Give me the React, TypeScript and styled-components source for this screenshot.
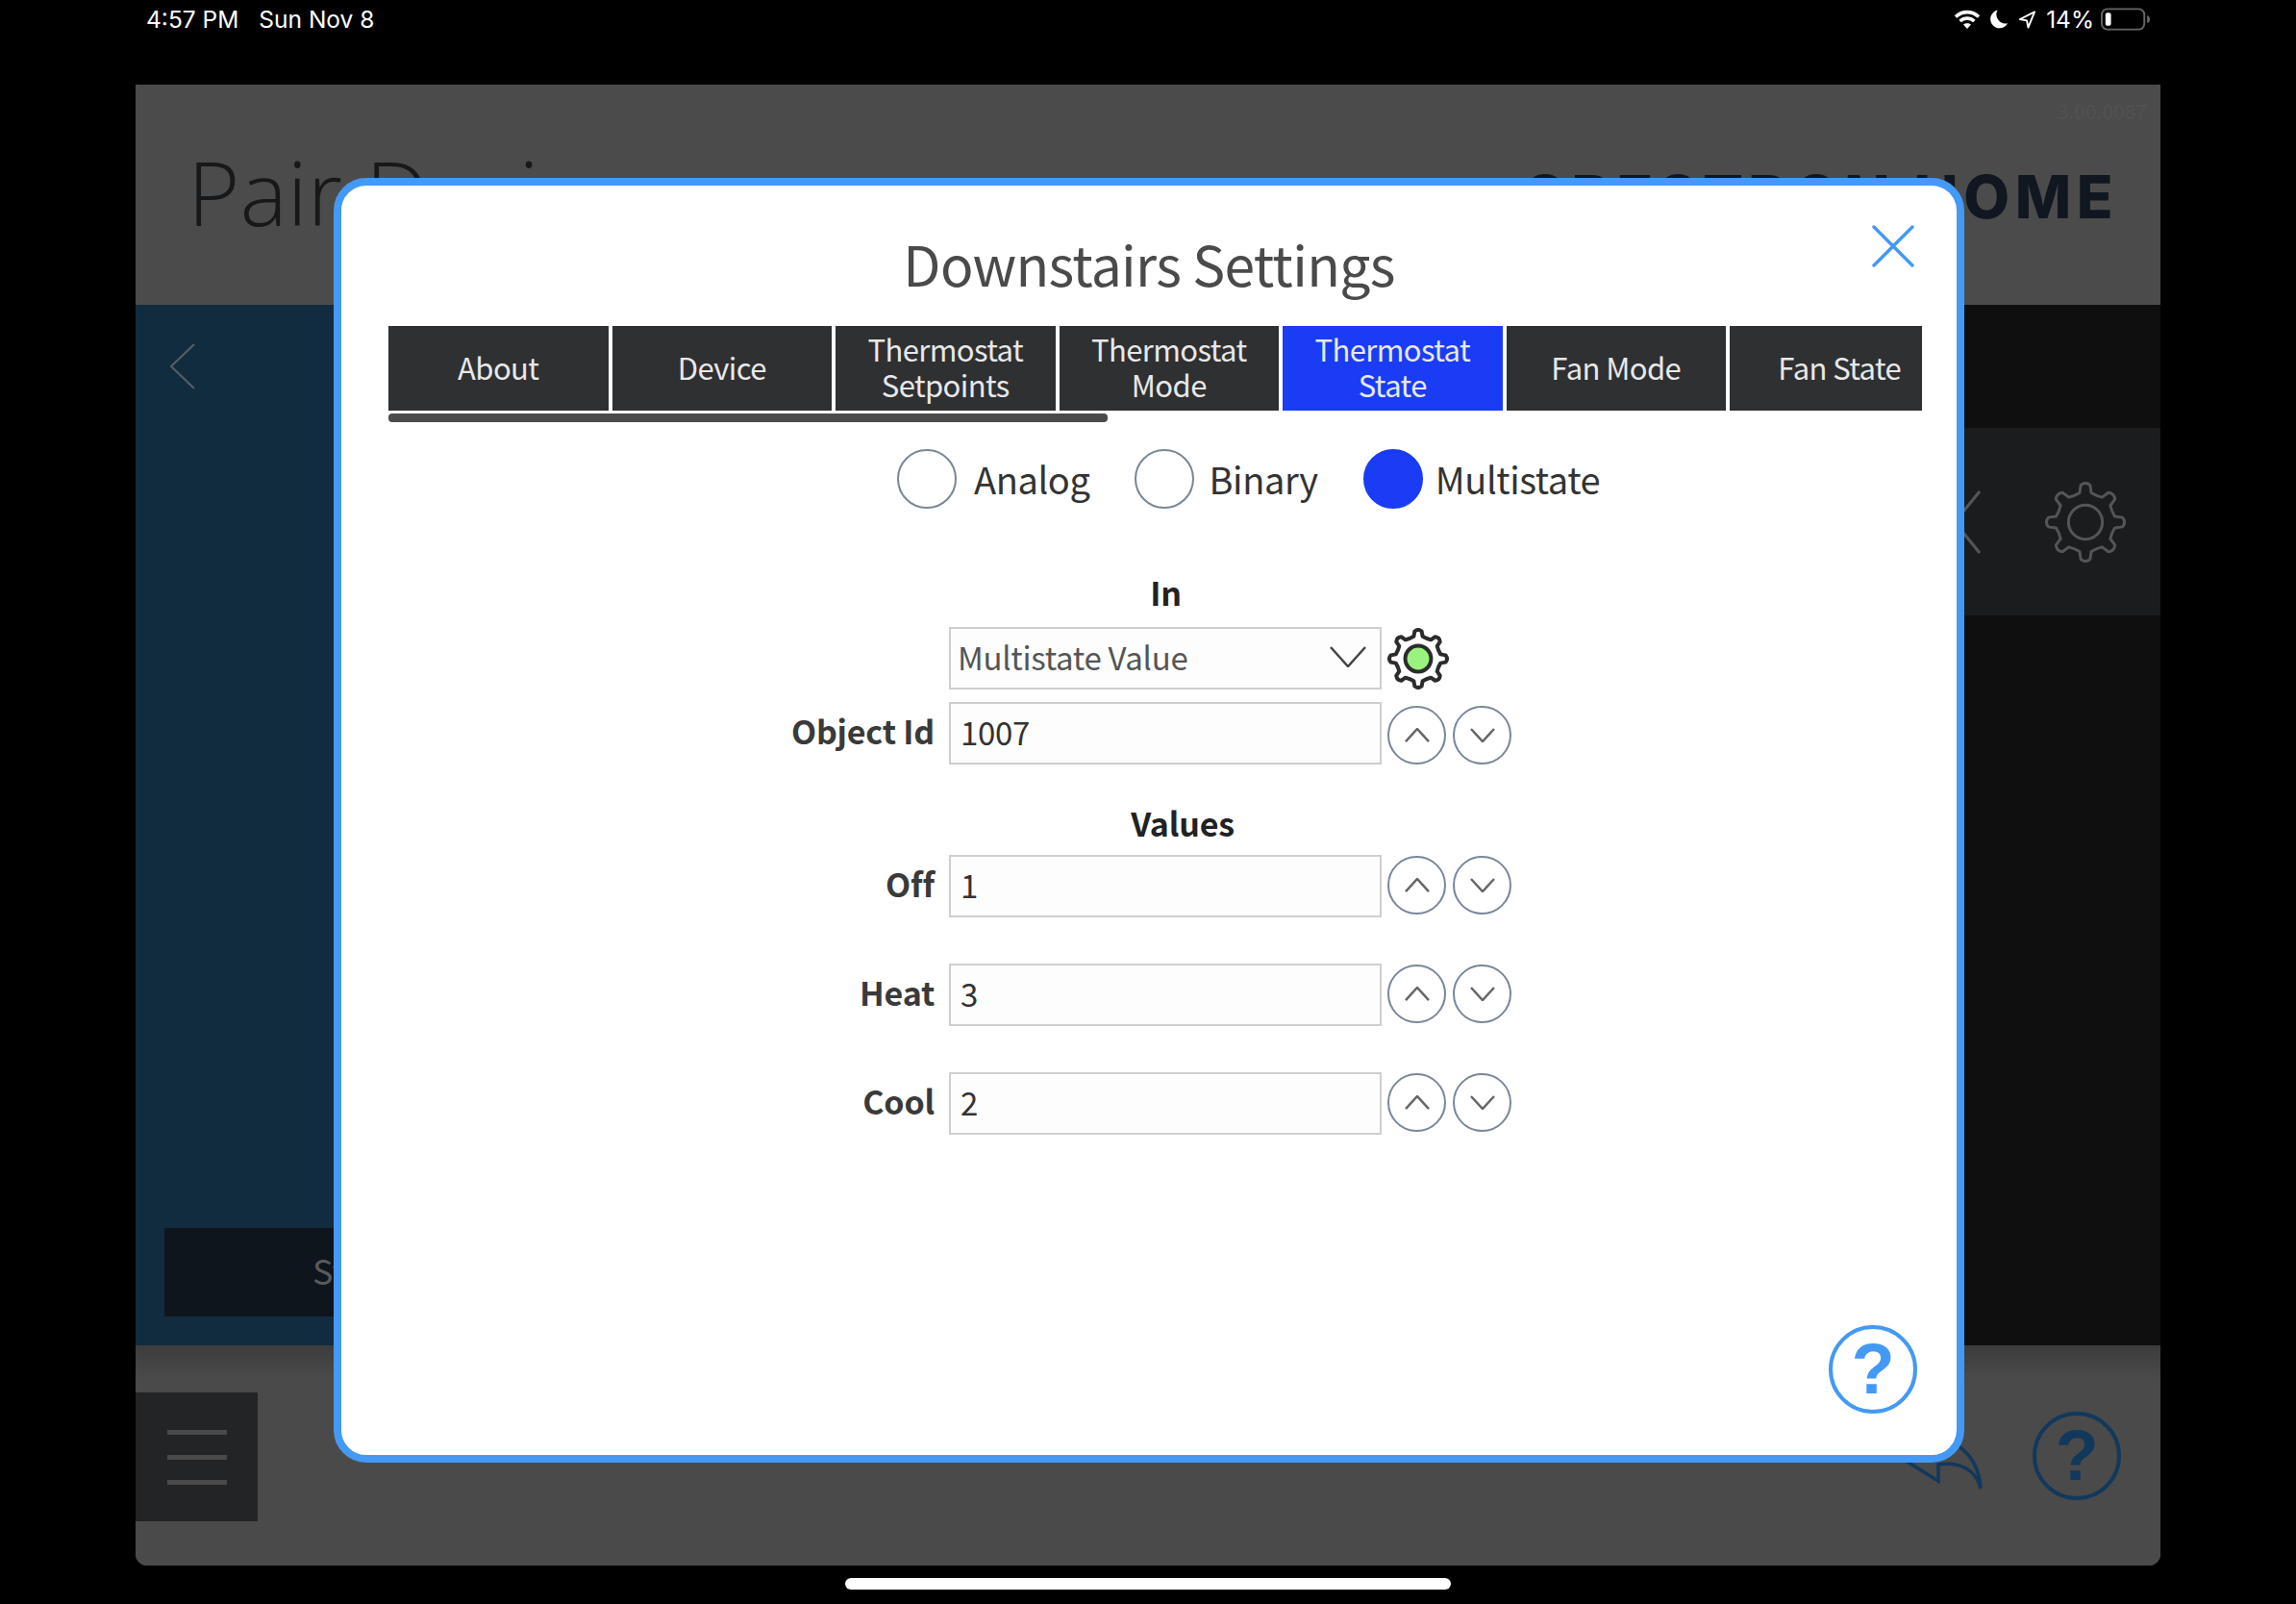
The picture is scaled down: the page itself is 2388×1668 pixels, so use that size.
import React from 'react';
import styled, { createGlobalStyle } from 'styled-components';

const UI_FONT = '"Noto Sans CJK SC", "Noto Sans", sans-serif';
const BLUE = '#4499f5';

const GlobalStyle = createGlobalStyle`
  html, body { margin: 0; padding: 0; background: #000; }
  * { box-sizing: border-box; }
`;

const Screen = styled.div`
  position: relative;
  width: 2388px;
  height: 1668px;
  background: #000;
  overflow: hidden;
  display: flex;
  flex-direction: column;
`;

const StatusBar = styled.div`
  height: 88px;
  flex: none;
  padding: 4px 151px 0 152px;
  display: flex;
  align-items: flex-start;
  justify-content: space-between;
  color: #fff;
  font: 400 24.5px/32px 'Inter', 'Liberation Sans', sans-serif;
`;

const StatusLeft = styled.div`
  display: flex;
  gap: 21px;
`;

const StatusRight = styled.div`
  display: flex;
  align-items: center;
  height: 32px;
  gap: 10px;
`;

const BatteryIcon = styled.svg`
  margin-left: -3px;
`;

const Frame = styled.div`
  flex: none;
  width: 2106px;
  height: 1540px;
  margin-left: 141px;
  border-radius: 0 0 12px 12px;
  overflow: hidden;
  display: flex;
  flex-direction: column;
  background: #4a4a4a;
`;

const HeaderBar = styled.header`
  position: relative;
  height: 229px;
  flex: none;
  padding: 0 44px 0 54px;
  display: flex;
  align-items: center;
  justify-content: space-between;
  background: #4b4b4b;
`;

const PageTitle = styled.h1`
  margin: 0;
  font: 300 93px/1 'Open Sans', sans-serif;
  color: #17181a;
  transform: translateY(-3px);
`;

const Brand = styled.div`
  font: 800 62px/1 'Inter', 'Liberation Sans', sans-serif;
  letter-spacing: 5.5px;
  color: #111720;
  transform: translateY(2px);
`;

const Version = styled.span`
  position: absolute;
  top: 17px;
  right: 14px;
  font: 400 21px/1 ${UI_FONT};
  color: #525252;
`;

const Middle = styled.div`
  flex: none;
  height: 1082px;
  display: grid;
  grid-template-columns: 1fr 1fr;
`;

const BluePanel = styled.div`
  background: #122c3f;
  padding: 40px 0 30px 30px;
  display: flex;
  flex-direction: column;
  justify-content: space-between;
`;

const BackIcon = styled.svg`
  display: block;
  margin-left: 6px;
`;

const StartButton = styled.div`
  height: 92px;
  background: #0e151c;
  padding-left: 154px;
  font: 400 36px/87px ${UI_FONT};
  color: #585a5c;
`;

const DarkPanel = styled.div`
  background: #0f0f0f;
  padding-top: 128px;
`;

const ToolStrip = styled.div`
  height: 195px;
  background: #1b1c1e;
  padding-right: 36px;
  display: flex;
  align-items: center;
  justify-content: flex-end;
  gap: 67px;
`;

const BottomBar = styled.footer`
  flex: 1;
  padding: 49px 41px 46px 0;
  display: flex;
  align-items: flex-start;
  justify-content: space-between;
  background: linear-gradient(#3c3c3c, #4a4a4a 34px);
`;

const MenuBox = styled.div`
  width: 127px;
  height: 134px;
  background: #232425;
  display: flex;
  flex-direction: column;
  justify-content: center;
  align-items: center;
  gap: 21px;
`;

const MenuLine = styled.span`
  width: 62px;
  height: 5px;
  background: #4a4a4a;
`;

const BottomActions = styled.div`
  display: flex;
  align-items: flex-start;
  gap: 51px;
  margin-top: 20px;
`;

const ReplyIcon = styled.svg`
  margin-top: 35px;
  overflow: visible;
`;

const HelpCircle = styled.div<{ $color: string }>`
  width: 92px;
  height: 92px;
  border-radius: 50%;
  border: 4px solid ${(p) => p.$color};
  color: ${(p) => p.$color};
  display: flex;
  align-items: center;
  justify-content: center;
  font: 700 74px/1 'Liberation Sans', sans-serif;
`;

const HomeIndicator = styled.div`
  position: absolute;
  left: 879px;
  top: 1641px;
  width: 630px;
  height: 12px;
  border-radius: 6px;
  background: #fff;
`;

const Modal = styled.section`
  position: absolute;
  left: 347px;
  top: 185px;
  width: 1696px;
  height: 1336px;
  background: #fff;
  border: 8px solid ${BLUE};
  border-radius: 34px;
  font-family: ${UI_FONT};
  padding: 0 36px 0 49px;
`;

const ModalTitle = styled.h2`
  margin: 0 13px 0 0;
  height: 146px;
  padding-top: 44px;
  text-align: center;
  font: 400 57px/72px ${UI_FONT};
  letter-spacing: -0.7px;
  color: #4a4a4a;
`;

const CloseIcon = styled.svg`
  position: absolute;
  right: 44px;
  top: 41px;
`;

const TabStrip = styled.div`
  position: relative;
  width: 1595px;
  height: 100px;
  overflow: hidden;
`;

const TabRow = styled.div`
  display: flex;
  gap: 4px;
  width: max-content;
`;

const Tab = styled.div<{ $active?: boolean }>`
  flex: none;
  width: 228.5px;
  height: 88px;
  padding-bottom: 4px;
  display: flex;
  align-items: center;
  justify-content: center;
  text-align: center;
  white-space: pre-line;
  font-size: 31px;
  letter-spacing: -0.6px;
  line-height: 37px;
  color: #e8e8e8;
  background: ${(p) => (p.$active ? '#1a3cf5' : '#2f3032')};
`;

const ScrollThumb = styled.div`
  position: absolute;
  left: 0;
  top: 91px;
  width: 748px;
  height: 9px;
  border-radius: 4px;
  background: #4a4a4a;
`;

const RadioRow = styled.div`
  display: flex;
  height: 62px;
  margin-top: 28px;
  padding-left: 529px;
  align-items: center;
`;

const RadioCircle = styled.span<{ $checked?: boolean }>`
  flex: none;
  width: 62px;
  height: 62px;
  border-radius: 50%;
  border: 2px solid ${(p) => (p.$checked ? '#1a3cf5' : '#7a8798')};
  background: ${(p) => (p.$checked ? '#1a3cf5' : '#fff')};
`;

const RadioLabel = styled.span<{ $gap: number; $after: number }>`
  margin-left: ${(p) => p.$gap}px;
  margin-right: ${(p) => p.$after}px;
  font-size: 38px;
  letter-spacing: -0.4px;
  line-height: 62px;
  color: #333;
`;

const SectionHeading = styled.div<{ $shift: number; $top: number; $bottom: number }>`
  margin: ${(p) => p.$top}px 0 ${(p) => p.$bottom}px ${(p) => p.$shift}px;
  font-size: 34px;
  letter-spacing: -0.2px;
  line-height: 44px;
  font-weight: 700;
  color: #222;
`;

const HeadingRow = styled.div`
  display: flex;
  justify-content: center;
`;

const FieldRow = styled.div<{ $after?: number }>`
  display: grid;
  grid-template-columns: 568px 450px auto;
  column-gap: 15px;
  align-items: center;
  height: 65px;
  margin-bottom: ${(p) => p.$after ?? 0}px;
`;

const FieldLabel = styled.label`
  text-align: right;
  font-size: 34px;
  letter-spacing: -0.2px;
  line-height: 44px;
  padding-bottom: 5px;
  font-weight: 700;
  color: #3a3a3a;
`;

const FieldBox = styled.div<{ $muted?: boolean }>`
  width: 450px;
  height: 65px;
  padding: 0 14px ${(p) => (p.$muted ? 3 : 4)}px ${(p) => (p.$muted ? 7 : 10)}px;
  border: 2px solid #cfcfcf;
  background: #fdfdfd;
  display: flex;
  align-items: center;
  justify-content: space-between;
  font-size: 33px;
  letter-spacing: -0.3px;
  color: ${(p) => (p.$muted ? '#555' : '#333')};
`;

const Stepper = styled.div<{ $low?: boolean }>`
  display: flex;
  gap: 7px;
  margin-left: -9px;
  align-self: ${(p) => (p.$low ? 'end' : 'center')};
  transform: translateY(${(p) => (p.$low ? 0 : -1)}px);
`;

const StepButton = styled.div`
  width: 61px;
  height: 61px;
  border-radius: 50%;
  border: 2px solid #7a8798;
  display: flex;
  align-items: center;
  justify-content: center;
`;

const GearSlot = styled.div`
  margin-left: -9px;
  height: 65px;
  display: flex;
  align-items: center;
`;

const ModalHelp = styled.div`
  position: absolute;
  right: 41px;
  bottom: 43px;
`;

function gearPath(cx: number, cy: number, outer: number, inner: number, teeth: number): string {
  const step = (Math.PI * 2) / teeth;
  const pts: string[] = [];
  for (let i = 0; i < teeth; i++) {
    const a = i * step - Math.PI / 2;
    const at = (r: number, t: number) =>
      `${(cx + r * Math.cos(a + t * step)).toFixed(2)} ${(cy + r * Math.sin(a + t * step)).toFixed(2)}`;
    pts.push(
      `${i === 0 ? 'M' : 'L'}${at(inner, -0.25)}`,
      `L${at(outer * 0.96, -0.16)}`,
      `Q${at(outer * 1.05, 0)} ${at(outer * 0.96, 0.16)}`,
      `L${at(inner, 0.25)}`,
      `Q${at(inner * 0.95, 0.5)} ${at(inner, 0.75)}`,
    );
  }
  return pts.join(' ') + 'Z';
}

function Gear({ size, stroke, width, fill }: { size: number; stroke: string; width: number; fill?: string }) {
  const c = size / 2;
  return (
    <svg width={size} height={size} viewBox={`0 0 ${size} ${size}`}>
      <path
        d={gearPath(c, c, c - width / 2, c * 0.74, 8)}
        fill="none"
        stroke={stroke}
        strokeWidth={width}
        strokeLinejoin="round"
      />
      <circle cx={c} cy={c} r={c * 0.42} fill={fill ?? 'none'} stroke={stroke} strokeWidth={width} />
    </svg>
  );
}

function Chevron({ up, size, color, width }: { up?: boolean; size: number; color: string; width: number }) {
  const h = size * 0.58;
  return (
    <svg width={size} height={h} viewBox={`0 0 ${size} ${h}`} fill="none">
      <path
        d={up ? `M1 ${h - 1}L${size / 2} 1L${size - 1} ${h - 1}` : `M1 1L${size / 2} ${h - 1}L${size - 1} 1`}
        stroke={color}
        strokeWidth={width}
      />
    </svg>
  );
}

function SpinButtons({ low }: { low?: boolean }) {
  return (
    <Stepper $low={low}>
      <StepButton>
        <Chevron up size={26} color="#666" width={2.5} />
      </StepButton>
      <StepButton>
        <Chevron size={26} color="#666" width={2.5} />
      </StepButton>
    </Stepper>
  );
}

const TABS = [
  { text: 'About' },
  { text: 'Device' },
  { text: 'Thermostat\nSetpoints' },
  { text: 'Thermostat\nMode' },
  { text: 'Thermostat\nState', active: true },
  { text: 'Fan Mode' },
  { text: 'Fan State' },
];

const VALUES = [
  { label: 'Off', value: '1' },
  { label: 'Heat', value: '3' },
  { label: 'Cool', value: '2' },
];

export default function App(): JSX.Element {
  return (
    <Screen>
      <GlobalStyle />
      <StatusBar>
        <StatusLeft>
          <span>4:57 PM</span>
          <span>Sun Nov 8</span>
        </StatusLeft>
        <StatusRight>
          <svg width="28" height="22" viewBox="0 0 28 22" fill="none" stroke="#fff" strokeWidth="3.6">
            <path d="M2 8.5C9 2 19 2 26 8.5" />
            <path d="M6.6 13C11 9 17 9 21.4 13" />
            <path d="M14 21l-4-4.4c2.3-1.8 5.7-1.8 8 0z" fill="#fff" stroke="none" />
          </svg>
          <svg width="19" height="22" viewBox="0 0 20 22">
            <path d="M8 1A10 10 0 1 0 19 15.5A10 10 0 0 1 8 1z" fill="#fff" />
          </svg>
          <svg width="19" height="22" viewBox="0 0 20 22" fill="none" stroke="#fff" strokeWidth="2">
            <path d="M18 3L2 11l7.5 1.5L11 20z" strokeLinejoin="round" />
          </svg>
          <span>14%</span>
          <BatteryIcon width="52" height="24" viewBox="0 0 54 24">
            <rect x="1" y="1" width="46" height="22" rx="6" fill="none" stroke="#666" strokeWidth="2" />
            <rect x="5" y="5" width="6" height="14" rx="2" fill="#fff" />
            <path d="M50 8c2 0 3 2 3 4s-1 4-3 4z" fill="#666" />
          </BatteryIcon>
        </StatusRight>
      </StatusBar>

      <Frame>
        <HeaderBar>
          <PageTitle>Pair Devices</PageTitle>
          <Brand>CRESTRON HOME</Brand>
          <Version>3.00.0087</Version>
        </HeaderBar>
        <Middle>
          <BluePanel>
            <BackIcon width="26" height="48" viewBox="0 0 26 48" fill="none">
              <path d="M25 1L1 24L25 47" stroke="#555f66" strokeWidth="2" />
            </BackIcon>
            <StartButton>Start</StartButton>
          </BluePanel>
          <DarkPanel>
            <ToolStrip>
              <svg width="28" height="66" viewBox="0 0 28 66" fill="none">
                <path d="M27 1L1 33L27 65" stroke="#555" strokeWidth="3" />
              </svg>
              <Gear size={84} stroke="#555" width={3} />
            </ToolStrip>
          </DarkPanel>
        </Middle>
        <BottomBar>
          <MenuBox>
            <MenuLine />
            <MenuLine />
            <MenuLine />
          </MenuBox>
          <BottomActions>
            <ReplyIcon width="76" height="48" viewBox="0 0 76 48" fill="none">
              <path d="M-10 13L29 37V20C50 17 68 24 73 45C72 22 60 4 42 -3" stroke="#12385c" strokeWidth="3.5" />
            </ReplyIcon>
            <HelpCircle $color="#12385c">?</HelpCircle>
          </BottomActions>
        </BottomBar>
      </Frame>

      <Modal>
        <ModalTitle>Downstairs Settings</ModalTitle>
        <CloseIcon width="44" height="44" viewBox="0 0 44 44" fill="none">
          <path d="M2 2L42 42M42 2L2 42" stroke={BLUE} strokeWidth="3.5" strokeLinecap="round" />
        </CloseIcon>
        <TabStrip>
          <TabRow>
            {TABS.map((tab) => (
              <Tab key={tab.text} $active={tab.active}>
                {tab.text}
              </Tab>
            ))}
          </TabRow>
          <ScrollThumb />
        </TabStrip>
        <RadioRow>
          <RadioCircle />
          <RadioLabel $gap={18} $after={46}>Analog</RadioLabel>
          <RadioCircle />
          <RadioLabel $gap={16} $after={47}>Binary</RadioLabel>
          <RadioCircle $checked />
          <RadioLabel $gap={13} $after={0}>Multistate</RadioLabel>
        </RadioRow>
        <HeadingRow>
          <SectionHeading $shift={22} $top={65} $bottom={14}>In</SectionHeading>
        </HeadingRow>
        <FieldRow $after={13}>
          <span />
          <FieldBox $muted>
            Multistate Value
            <Chevron size={38} color="#444" width={2.5} />
          </FieldBox>
          <GearSlot>
            <Gear size={64} stroke="#2c2c2c" width={4} fill="#9af27f" />
          </GearSlot>
        </FieldRow>
        <FieldRow>
          <FieldLabel>Object Id</FieldLabel>
          <FieldBox>1007</FieldBox>
          <SpinButtons low />
        </FieldRow>
        <HeadingRow>
          <SectionHeading $shift={57} $top={39} $bottom={11}>Values</SectionHeading>
        </HeadingRow>
        {VALUES.map((row) => (
          <FieldRow key={row.label} $after={48}>
            <FieldLabel>{row.label}</FieldLabel>
            <FieldBox>{row.value}</FieldBox>
            <SpinButtons />
          </FieldRow>
        ))}
        <ModalHelp>
          <HelpCircle $color={BLUE}>?</HelpCircle>
        </ModalHelp>
      </Modal>
      <HomeIndicator />
    </Screen>
  );
}
